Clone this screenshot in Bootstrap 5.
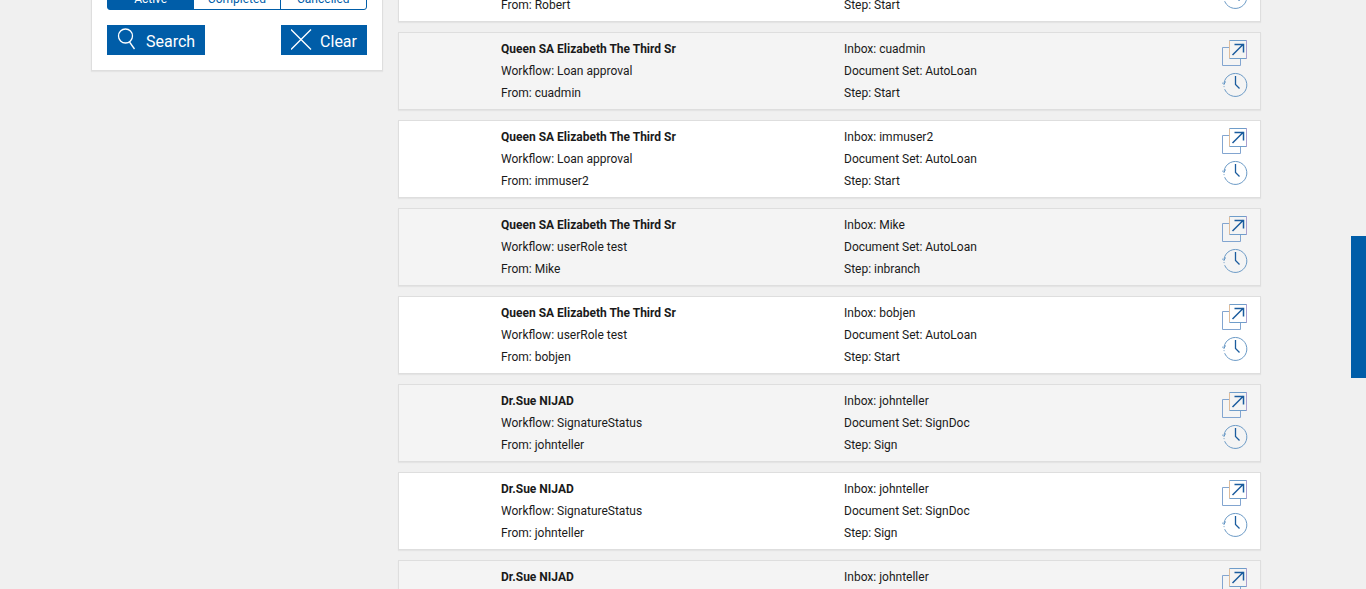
<!DOCTYPE html>
<html lang="en">
<head>
<meta charset="utf-8">
<meta name="viewport" content="width=device-width, initial-scale=1">
<title>Workflow search</title>
<link href="https://cdn.jsdelivr.net/npm/bootstrap@5.3.0/dist/css/bootstrap.min.css" rel="stylesheet">
<style>
  :root { --brand: #005da8; --edge: #dedede; }
  body { background: #f0f0f0; color: #1a1a1a; font: 12px/22px Roboto, "Open Sans", sans-serif; }
  .viewport { height: 100vh; overflow: hidden; padding-right: 14px; }
  .page { max-width: 1170px; gap: 15px; margin-top: -56px; }
  .filters { width: 292px; background: #fff; border: 1px solid var(--edge); box-shadow: 0 1px 1px #e4e4e4; padding: 36px 15px 15px; }
  .status .btn { --bs-btn-color: var(--brand); --bs-btn-border-color: var(--brand); --bs-btn-active-bg: var(--brand);
    --bs-btn-active-border-color: var(--brand); --bs-btn-active-color: #fff; --bs-btn-border-radius: 3px;
    font-size: 12px; line-height: 20px; padding: 7px 0 0; flex: 1 1 0; }
  .actions { margin-top: 15px; }
  .action { background: var(--brand); color: #fff; border: 0; border-radius: 0; height: 30px; padding: 0 10px; font-size: 16px; line-height: 30px; }
  .action:hover { background: #004d8c; color: #fff; }
  .action .caption { padding-top: 2px; }
  .results { gap: 10px; }
  .item { display: grid; grid-template-columns: 102px 343fr 378fr 38px; border: 1px solid var(--edge); box-shadow: 0 1px 1px #e4e4e4; background: #fff; min-height: 78px; padding-top: 5px; }
  .item:nth-child(even) { background: #f4f4f4; }
  .tools { gap: 6px; padding-top: 2px; }
  .tool { display: block; width: 26px; height: 26px; padding: 0; border: 0; background: none; }
  .tool svg, .action svg { display: block; fill: none; }
  .side-tab { position: fixed; right: 0; top: 40%; width: 15px; height: 142px; border: 0; background: var(--brand); }
</style>
</head>
<body>
<svg class="d-none" aria-hidden="true">
  <symbol id="i-open" viewBox="0 0 26 26">
    <path d="M7.500 7.500H.5v18h18v-7" stroke="#82a5d0"/>
    <path d="M7.500 18.500V.5" stroke="#dfbd9b"/>
    <path d="M7.500 .5h17M7.500 18.500h17" stroke="#6f9dca"/>
    <path d="M24.500 0v19" stroke="#aaa0d0"/>
    <path d="M10.500 15 21.500 4M12.500 4.500h9v8" stroke="#1b5c9e" stroke-width="1.500"/>
  </symbol>
  <symbol id="i-history" viewBox="0 0 26 26">
    <path d="M2 11A11.500 11.500 0 1 1 3 18" stroke="#6b9ac6"/>
    <path d="M3 18A11.500 11.500 0 0 1 2 13" stroke="#6b9ac6" stroke-dasharray="1 2"/>
    <path d="M0 10.500 2 12.500 3.500 9.500" stroke="#5d91c2"/>
    <path d="M13.500 4v8.500l4 4" stroke="#1b5c9e" stroke-width="1.300"/>
  </symbol>
</svg>

<div class="viewport">
  <div class="page d-flex align-items-start mx-auto">
    <form class="filters flex-shrink-0" onsubmit="return false">
      <div class="status btn-group d-flex" role="group" aria-label="Status">
        <input class="btn-check" type="radio" name="status" id="st-active" checked>
        <label class="btn" for="st-active">Active</label>
        <input class="btn-check" type="radio" name="status" id="st-completed">
        <label class="btn" for="st-completed">Completed</label>
        <input class="btn-check" type="radio" name="status" id="st-cancelled">
        <label class="btn" for="st-cancelled">Cancelled</label>
      </div>
      <div class="actions d-flex justify-content-between">
        <button class="action btn d-flex" type="submit">
          <svg width="29" height="30" viewBox="0 0 29 30" stroke="#fff" stroke-width="1.300" aria-hidden="true"><circle cx="8.500" cy="11" r="7"/><path d="m12.500 17 5 7"/></svg>
          <span class="caption">Search</span>
        </button>
        <button class="action btn d-flex" type="reset">
          <svg width="29" height="30" viewBox="0 0 29 30" stroke="#fff" stroke-width="1.300" aria-hidden="true"><path d="m0 4.500 20 20M20 4.500l-20 20"/></svg>
          <span class="caption">Clear</span>
        </button>
      </div>
    </form>
    <main class="results flex-grow-1 d-grid" id="results"></main>
  </div>
</div>
<button class="side-tab" type="button" aria-label="Open side panel"></button>

<script src="https://cdn.jsdelivr.net/npm/bootstrap@5.3.0/dist/js/bootstrap.bundle.min.js"></script>
<script>
  const queen = 'Queen SA Elizabeth The Third Sr', sue = 'Dr.Sue NIJAD';
  const rows = [
    [queen, 'Loan approval', 'Robert', 'Robert', 'AutoLoan', 'Start'],
    [queen, 'Loan approval', 'cuadmin', 'cuadmin', 'AutoLoan', 'Start'],
    [queen, 'Loan approval', 'immuser2', 'immuser2', 'AutoLoan', 'Start'],
    [queen, 'userRole test', 'Mike', 'Mike', 'AutoLoan', 'inbranch'],
    [queen, 'userRole test', 'bobjen', 'bobjen', 'AutoLoan', 'Start'],
    [sue, 'SignatureStatus', 'johnteller', 'johnteller', 'SignDoc', 'Sign'],
    [sue, 'SignatureStatus', 'johnteller', 'johnteller', 'SignDoc', 'Sign'],
    [sue, 'SignatureStatus', 'johnteller', 'johnteller', 'SignDoc', 'Sign']
  ];
  document.getElementById('results').innerHTML = rows.map(([name, flow, from, inbox, set, step]) => `
    <article class="item">
      <div></div>
      <div><div class="fw-bold">${name}</div><div>Workflow: ${flow}</div><div>From: ${from}</div></div>
      <div><div>Inbox: ${inbox}</div><div>Document Set: ${set}</div><div>Step: ${step}</div></div>
      <div class="tools d-grid align-content-start">
        <button class="tool" type="button" aria-label="Open"><svg width="26" height="26"><use href="#i-open"/></svg></button>
        <button class="tool" type="button" aria-label="History"><svg width="26" height="26"><use href="#i-history"/></svg></button>
      </div>
    </article>`).join('');
</script>
</body>
</html>
